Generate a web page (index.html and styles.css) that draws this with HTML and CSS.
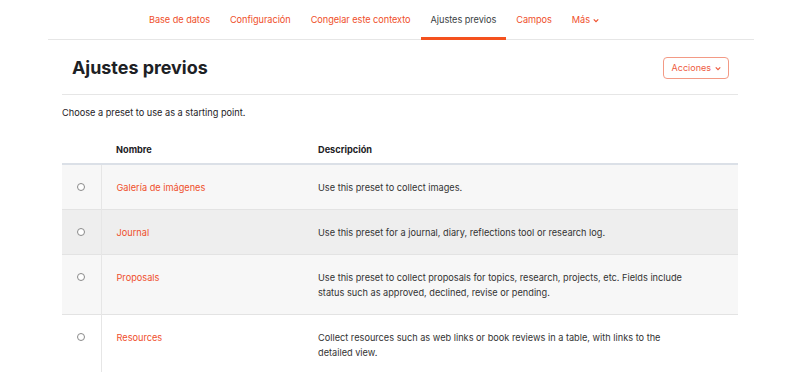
FILE: index.html
```html
<!DOCTYPE html>
<html lang="es">
<head>
<meta charset="utf-8">
<title>Ajustes previos</title>
<link rel="stylesheet" href="styles.css">
</head>
<body>
<div class="page">
  <nav class="secondary-nav">
    <a class="nav-item" href="#">Base de datos</a>
    <a class="nav-item" href="#">Configuración</a>
    <a class="nav-item" href="#">Congelar este contexto</a>
    <a class="nav-item active" href="#">Ajustes previos</a>
    <a class="nav-item" href="#">Campos</a>
    <a class="nav-item" href="#">Más <svg class="chev" viewBox="0 0 8 6" width="6" height="5"><path d="M1 1.5 L4 4.5 L7 1.5" fill="none" stroke="currentColor" stroke-width="1.6"/></svg></a>
  </nav>
  <main class="main">
    <div class="header">
      <h2 class="title">Ajustes previos</h2>
      <button class="btn-actions" type="button">Acciones <svg class="chev" viewBox="0 0 8 6" width="6" height="5"><path d="M1 1.5 L4 4.5 L7 1.5" fill="none" stroke="currentColor" stroke-width="1.6"/></svg></button>
    </div>
    <p class="intro">Choose a preset to use as a starting point.</p>
    <table class="presets">
      <thead>
        <tr>
          <th class="col-radio"></th>
          <th class="col-name">Nombre</th>
          <th class="col-desc">Descripción</th>
        </tr>
      </thead>
      <tbody>
        <tr class="stripe">
          <td class="col-radio"><span class="radio"></span></td>
          <td class="col-name"><a href="#">Galería de imágenes</a></td>
          <td class="col-desc">Use this preset to collect images.</td>
        </tr>
        <tr class="hover">
          <td class="col-radio"><span class="radio"></span></td>
          <td class="col-name"><a href="#">Journal</a></td>
          <td class="col-desc">Use this preset for a journal, diary, reflections tool or research log.</td>
        </tr>
        <tr class="stripe">
          <td class="col-radio"><span class="radio"></span></td>
          <td class="col-name"><a href="#">Proposals</a></td>
          <td class="col-desc">Use this preset to collect proposals for topics, research, projects, etc. Fields include status such as approved, declined, revise or pending.</td>
        </tr>
        <tr>
          <td class="col-radio"><span class="radio"></span></td>
          <td class="col-name"><a href="#">Resources</a></td>
          <td class="col-desc">Collect resources such as web links or book reviews in a table, with links to the detailed view.</td>
        </tr>
      </tbody>
    </table>
  </main>
</div>
</body>
</html>
```
FILE: styles.css
```css
* { box-sizing: border-box; }
html, body { margin: 0; padding: 0; background: #fff; }
body {
  font-family: Inter, "Noto Sans", sans-serif;
  font-size: 9.2px;
  line-height: 14.5px;
  color: #1d2125;
}
a { color: #ef4f2b; text-decoration: none; }
.page { margin: 0 58px 0 48px; }

.secondary-nav {
  display: flex;
  height: 40px;
  padding-left: 91px;
  border-bottom: 1px solid #e6e6e6;
}
.nav-item {
  display: flex;
  align-items: center;
  gap: 3px;
  padding: 4px 10px 0;
  height: 40px;
  margin-bottom: -1px;
  border-bottom: 3px solid transparent;
  letter-spacing: -0.05px;
}
.nav-item.active { color: #3a3f44; border-bottom-color: #f4511e; }
.chev { display: block; }

.main { padding: 0 16px 0 14px; }
.header {
  display: flex;
  align-items: center;
  justify-content: space-between;
  height: 55px;
  padding: 0 9px 0 10px;
  border-bottom: 1px solid #e6e6e6;
}
.title {
  margin: 0;
  font-size: 17.9px;
  font-weight: 700;
  line-height: 24px;
  color: #1d2125;
  padding-top: 2px;
}
.btn-actions {
  display: flex;
  align-items: center;
  gap: 4px;
  height: 22px;
  padding: 0 7px 0 8px;
  margin-top: 2px;
  font: inherit;
  font-size: 9px;
  color: #ee5a3e;
  background: #fff;
  border: 1px solid #f39a85;
  border-radius: 4px;
}
.intro { margin: 11px 0 13px; }

.presets {
  width: 100%;
  border-collapse: collapse;
}
.presets th {
  text-align: left;
  font-weight: 700;
  padding: 9.5px 15px 5.5px;
  border-bottom: 2px solid #dbe0e7;
}
.presets td {
  vertical-align: top;
  line-height: 15px;
  padding: 15px 15px 14px;
  border-top: 1px solid #e3e3e3;
}
.presets tbody tr:first-child td { border-top: 0; }
.col-radio { width: 39px; }
.presets td.col-radio { border-right: 1px solid #e6e6e6; padding: 15px 0 0; text-align: center; }
.col-name { width: 202px; }
.presets td.col-desc { padding-right: 50px; color: #333; }
.stripe { background: #f7f7f7; }
.hover { background: #eeeeee; }
.radio {
  display: inline-block;
  width: 8px;
  height: 8px;
  border: 1px solid #8a8a8a;
  border-radius: 50%;
  background: #fff;
  margin-top: 3px;
}
```
